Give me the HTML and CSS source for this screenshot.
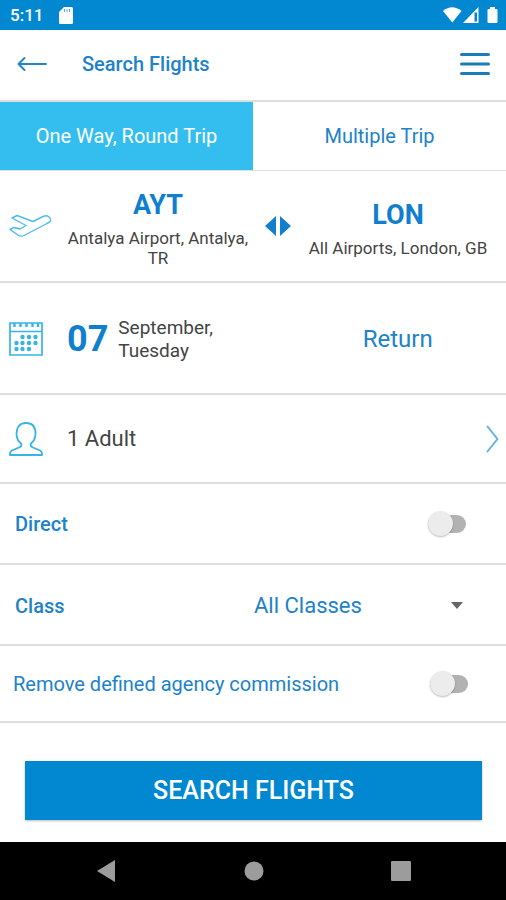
FILE: index.html
```html
<!DOCTYPE html>
<html lang="en">
<head>
<meta charset="utf-8">
<meta name="viewport" content="width=device-width, initial-scale=1">
<title>Search Flights</title>
<link rel="stylesheet" href="styles.css">
</head>
<body>
<div class="status">
  <span class="time">5:11</span>
  <svg width="14" height="17" viewBox="0 0 14 17"><path fill="#fff" d="M5 0h7.500Q14 0 14 1.500V15.500Q14 17 12.500 17H1.500Q0 17 0 15.500V5z"/><path stroke="#0288d1" stroke-width="1" stroke-opacity=".7" d="M5.500 2v3M8 2v3M10.500 2v3"/></svg>
  <svg class="signals" width="55" height="17" viewBox="0 0 55 17"><path fill="#fff" d="M0 4Q9 -3.500 18.500 4L9.300 15.500z"/><path fill="#fff" fill-rule="evenodd" d="M35.500 0v16H20zM34 5.500h-2.500V14.500H34z"/><path fill="#fff" d="M47 0h5v2h1.500q1 0 1 1V15q0 1-1 1h-8q-1 0-1-1V3q0-1 1-1H47z"/></svg>
</div>
<header class="header">
  <button class="icon-button" aria-label="Back"><svg width="30" height="16" viewBox="0 0 30 16" fill="none" stroke="#2286c8" stroke-width="2" stroke-linecap="round" stroke-linejoin="round"><path d="M7.500 2 1.500 8l6 6M1.500 8H29"/></svg></button>
  <h1 class="title">Search Flights</h1>
  <button class="icon-button" aria-label="Menu"><svg width="30" height="24" viewBox="0 0 30 24" stroke="#1a7dba" stroke-width="3" stroke-linecap="round"><path d="M1.500 2.500h27M1.500 12h27M1.500 21.500h27"/></svg></button>
</header>
<nav class="tabs">
  <button class="tab active">One Way, Round Trip</button>
  <button class="tab">Multiple Trip</button>
</nav>
<main>
  <section class="row route">
    <svg width="42" height="24" viewBox="0 0 42 24" fill="none" stroke="#4bbdec" stroke-width="1.400" stroke-linejoin="round"><path d="M1 15.500 5 13.500 11 15 17 11.500 3 4 8 1.500 24 7.500 34 2.500Q39 .5 41 4T38 9.500L15 21.500Q12 23 9 21z"/></svg>
    <button class="airport"><strong class="code">AYT</strong><span class="place">Antalya Airport, Antalya, TR</span></button>
    <button class="icon-button" aria-label="Swap airports"><svg width="26" height="20" viewBox="0 0 26 20" fill="#117fce"><path d="M11 0v20L0 10zM15 0v20l11-10z"/></svg></button>
    <button class="airport"><strong class="code">LON</strong><span class="place">All Airports, London, GB</span></button>
  </section>
  <section class="row dates">
    <svg width="34" height="34" viewBox="0 0 34 34"><path fill="none" stroke="#35b4e8" stroke-width="1.700" d="M1 1h32v32H1zM1 9.500h32"/><path stroke="#35b4e8" stroke-width="2.400" d="M5.500 1v4M11.500 1v4M17.500 1v4M23.500 1v4M29 1v4"/><g fill="#35b4e8"><circle cx="13.500" cy="15" r="2.200"/><circle cx="20" cy="15" r="2.200"/><circle cx="26.500" cy="15" r="2.200"/><circle cx="7.500" cy="21" r="2.200"/><circle cx="13.500" cy="21" r="2.200"/><circle cx="20" cy="21" r="2.200"/><circle cx="26.500" cy="21" r="2.200"/><circle cx="7.500" cy="27" r="2.200"/><circle cx="13.500" cy="27" r="2.200"/><circle cx="20" cy="27" r="2.200"/></g></svg>
    <button class="depart"><strong class="day">07</strong><span>September,<br>Tuesday</span></button>
    <button class="return">Return</button>
  </section>
  <button class="row passengers">
    <svg width="34" height="34" viewBox="0 0 34 34" fill="none" stroke="#35b4e8" stroke-width="1.800" stroke-linejoin="round"><path d="M17 1C10 1 7.500 6 7.500 11.500 7.500 16 9.500 19.500 12 21.500Q13.500 24 10 25.500L3 28.500Q1 29.500 1 31.500V33H33V31.500Q33 29.500 31 28.500L24 25.500Q20.500 24 22 21.500C24.500 19.500 26.500 16 26.500 11.500 26.500 6 24 1 17 1z"/></svg>
    <span class="count">1 Adult</span>
    <svg width="13" height="28" viewBox="0 0 13 28" fill="none" stroke="#62b3e4" stroke-width="2" stroke-linecap="round" stroke-linejoin="round"><path d="M1.500 1.500 11.500 14l-10 12.500"/></svg>
  </button>
  <div class="row option">
    <label class="name" for="direct">Direct</label>
    <input class="switch" type="checkbox" role="switch" id="direct">
  </div>
  <div class="row option class-row">
    <label class="name" for="class">Class</label>
    <div class="picker">
      <select id="class"><option>All Classes</option></select>
      <svg width="12" height="7" viewBox="0 0 12 7"><path fill="#666" d="M0 0h12L6 7z"/></svg>
    </div>
  </div>
  <div class="row option commission">
    <label for="commission">Remove defined agency commission</label>
    <input class="switch" type="checkbox" role="switch" id="commission">
  </div>
  <div class="action"><button class="search">SEARCH FLIGHTS</button></div>
</main>
<footer class="system">
  <button class="icon-button" aria-label="System back"><svg width="22" height="22" viewBox="0 0 22 22"><path fill="#9c9c9c" d="M20 0v22L2 11z"/></svg></button>
  <button class="icon-button" aria-label="Home"><svg width="20" height="20" viewBox="0 0 20 20"><circle fill="#9c9c9c" cx="10" cy="10" r="9.500"/></svg></button>
  <button class="icon-button" aria-label="Recent apps"><svg width="20" height="20" viewBox="0 0 20 20"><rect fill="#9c9c9c" width="20" height="20" rx="1"/></svg></button>
</footer>
</body>
</html>
```
FILE: styles.css
```css
* { box-sizing: border-box; }
body {
  margin: 0;
  min-height: 100vh;
  display: flex;
  flex-direction: column;
  background: #fff;
  color: #444;
  font-family: Roboto, "Liberation Sans", sans-serif;
}
button, select {
  margin: 0;
  padding: 0;
  border: 0;
  background: none;
  color: inherit;
  font: inherit;
}
svg { display: block; flex: none; }
.icon-button { flex: none; }
.status {
  height: 30px;
  padding: 0 8px 0 10px;
  display: flex;
  align-items: center;
  gap: 16px;
  background: #0288d1;
  color: #fff;
  font-size: 17px;
  font-weight: 500;
}
.signals { margin-left: auto; }
.header {
  height: 72px;
  padding: 0 16px 2px 17px;
  display: flex;
  align-items: center;
  border-bottom: 2px solid #dedede;
}
.title {
  margin: 0 auto 0 35px;
  color: #2082c8;
  font-size: 20px;
  font-weight: 500;
}
.tabs {
  height: 69px;
  display: grid;
  grid-template-columns: 1fr 1fr;
  border-bottom: 1px solid #dedede;
  color: #2082c8;
  font-size: 20px;
}
.tab.active { background: #33beef; color: #fff; }
.row { border-bottom: 2px solid #dedede; }
.route {
  min-height: 112px;
  padding: 0 15px 0 9px;
  display: grid;
  grid-template-columns: 42px 1fr 26px 1fr;
  gap: 14px;
  align-items: center;
}
.airport {
  padding-top: 5px;
  display: flex;
  flex-direction: column;
  align-items: center;
  gap: 8px;
}
.code {
  color: #117fce;
  font-size: 27px;
  font-weight: 700;
  line-height: 30px;
}
.place { font-size: 17px; line-height: 20px; }
.dates {
  height: 112px;
  padding: 2px 0 0 9px;
  display: flex;
  align-items: center;
}
.depart {
  flex: 1;
  margin-left: 24px;
  display: flex;
  align-items: center;
  gap: 10px;
  font-size: 19px;
  line-height: 23px;
  text-align: left;
}
.day {
  color: #117fce;
  font-size: 36px;
  font-weight: 700;
}
.return {
  width: 43%;
  padding-right: 3px;
  color: #2082c8;
  font-size: 24px;
}
.passengers {
  width: 100%;
  height: 89px;
  padding: 0 7px 0 9px;
  display: flex;
  align-items: center;
  text-align: left;
}
.count { flex: 1; margin-left: 24px; font-size: 22px; }
.option {
  height: 81px;
  padding: 0 40px 0 15px;
  display: flex;
  align-items: center;
  justify-content: space-between;
  color: #2082c8;
}
.name { font-size: 20px; font-weight: 500; }
.switch {
  appearance: none;
  width: 38px;
  height: 18px;
  margin: 0;
  display: flex;
  align-items: center;
  border-radius: 9px;
  background: #b2b2b2;
}
.switch::before {
  content: "";
  width: 25px;
  height: 25px;
  flex: none;
  border-radius: 50%;
  background: #ececec;
  box-shadow: 0 1px 2px #0004;
}
.switch:checked::before { margin-left: auto; background: #0288d1; }
.picker { width: 212px; display: grid; align-items: center; }
.picker > * { grid-area: 1 / 1; }
.picker svg { justify-self: end; margin-right: 3px; pointer-events: none; }
.picker select { appearance: none; width: 100%; font-size: 22px; }
.class-row { padding-top: 2px; }
.commission {
  height: 77px;
  padding: 0 38px 0 13px;
  font-size: 20px;
}
.action { padding: 38px 24px 22px 25px; }
.search {
  width: 100%;
  height: 59px;
  background: #0288d1;
  color: #fff;
  font-size: 25px;
  font-weight: 500;
  box-shadow: 0 1px 2px #0004;
}
.system {
  height: 58px;
  margin-top: auto;
  padding: 0 32px;
  display: flex;
  align-items: center;
  justify-content: space-around;
  background: #000;
}
```
